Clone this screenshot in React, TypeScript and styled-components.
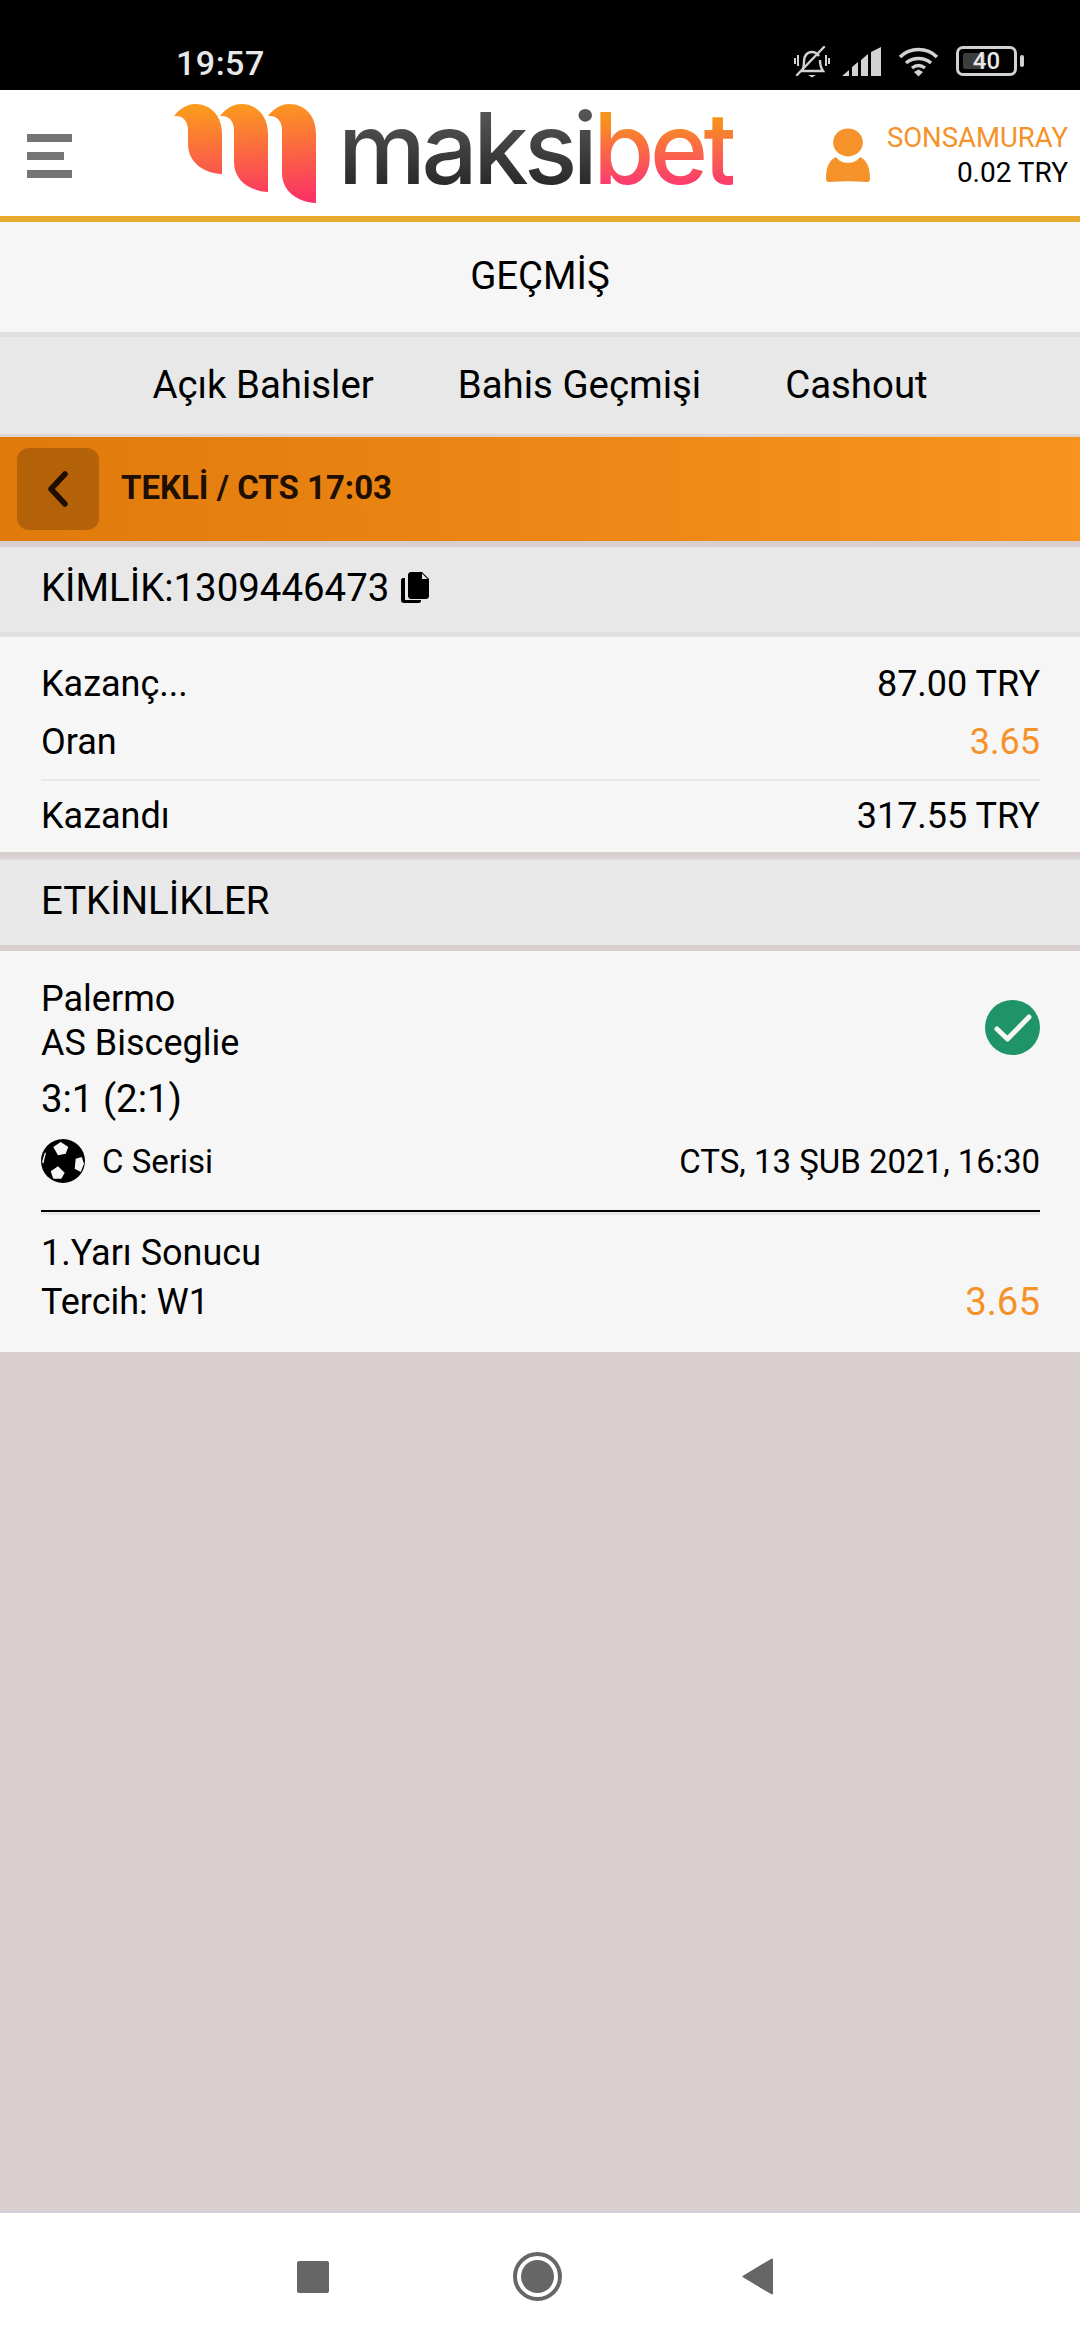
import styled, { createGlobalStyle } from 'styled-components'

const ORANGE = '#f5922a'

const GlobalStyle = createGlobalStyle`
  html, body {
    margin: 0;
    padding: 0;
    background: #d9cfcf;
  }
  * {
    box-sizing: border-box;
  }
`

export default function App() {
  return (
    <Page>
      <GlobalStyle />
      <StatusBar>
        <Clock>19:57</Clock>
        <StatusIcons>
          <svg width="36" height="32" viewBox="0 0 36 32" fill="none" stroke="#d2d2d2" strokeWidth="2.4">
            <path d="M8 25c2-3 2-6 2-10 0-5 3-9 8-9 3 0 5 1 7 4M26 14c0 5 1 8 3 11H7" />
            <path d="M3 29 30 1" strokeLinecap="round" />
            <path d="M1 12v6M4 9v11M32 9v11M35 12v6" strokeWidth="2" />
            <path d="M14 29h8l-4 2.5z" fill="#d2d2d2" stroke="none" />
          </svg>
          <SignalIcon width="40" height="30" viewBox="0 0 40 30" fill="#d2d2d2">
            <path d="M0 29 7 23v6zM10 20l6-5v14h-6zM19 13l7-6v22h-7zM29 5l10-5v29H29z" />
          </SignalIcon>
          <WifiIcon width="41" height="30" viewBox="0 0 41 30" fill="none" stroke="#d2d2d2" strokeWidth="3.4">
            <path d="M2 10C12 0 29 0 39 10M8 16c7-6 18-6 25 0M14 21c4-3 9-3 13 0" />
            <path d="M16 25l4.500-2.500L25 25l-4.500 4.500z" fill="#d2d2d2" stroke="none" />
          </WifiIcon>
          <Battery>
            <BatteryLevel />
            <BatteryText>40</BatteryText>
            <BatteryNub />
          </Battery>
        </StatusIcons>
      </StatusBar>

      <Header>
        <Hamburger>
          <Bar />
          <Bar $short />
          <Bar />
        </Hamburger>
        <LogoMark width="142" height="99" viewBox="0 0 142 99">
          <defs>
            <linearGradient id="leaf" gradientUnits="userSpaceOnUse" x1="70" y1="0" x2="78" y2="99">
              <stop offset="0" stopColor="#fb9a1e" />
              <stop offset="1" stopColor="#fb3366" />
            </linearGradient>
          </defs>
          <g fill="url(#leaf)">
            <path d="M0 12c6-8 14-12 21-12 16 0 27 12 27 30v40c-19-1-34-12-34-30V26c0-9-5-15-14-14z" />
            <path d="M46 12c6-8 14-12 21-12 16 0 27 12 27 30v58c-19-1-34-12-34-30V26c0-9-5-15-14-14z" />
            <path d="M94 12c6-8 14-12 21-12 16 0 27 12 27 30v69c-19-1-34-12-34-30V26c0-9-5-15-14-14z" />
          </g>
        </LogoMark>
        <Wordmark>
          <WordDark>maksi</WordDark>
          <WordBright>bet</WordBright>
        </Wordmark>
        <UserBlock>
          <svg width="44" height="55" viewBox="0 0 43 57" preserveAspectRatio="none" fill={ORANGE}>
            <circle cx="21.500" cy="15" r="14.500" />
            <path d="M0 52c0-11 3-19 10-22 2 4 6 6 11.500 6S31 34 33 30c7 3 10 11 10 22 0 3-1 4-3 4-12-1-25-1-37 0-2 0-3-1-3-4z" />
          </svg>
          <UserText>
            <UserName>SONSAMURAY</UserName>
            <Balance>0.02 TRY</Balance>
          </UserText>
        </UserBlock>
      </Header>

      <PageTitle>GEÇMİŞ</PageTitle>

      <Tabs>
        <Tab>Açık Bahisler</Tab>
        <Tab>Bahis Geçmişi</Tab>
        <Tab>Cashout</Tab>
      </Tabs>

      <BetBar>
        <BackButton>
          <svg width="22" height="36" viewBox="0 0 22 36" fill="none" stroke="#1f0f00" strokeWidth="5.500" strokeLinecap="round" strokeLinejoin="round">
            <path d="M18 3 4 18l14 15" />
          </svg>
        </BackButton>
        <BetTitle>TEKLİ / CTS 17:03</BetTitle>
      </BetBar>

      <IdBar>
        KİMLİK:1309446473
        <svg width="28" height="31" viewBox="0 0 28 31" fill="#000">
          <path d="M7 3c0-1.500 1-3 3-3h11l7 7v17c0 1.500-1 3-3 3H10c-2 0-3-1.500-3-3z" />
          <path d="M0 8c0-1 1-2 2-2h2v21c0 .6.400 1 1 1h15v1c0 1-1 2-2 2H3c-2 0-3-1-3-3z" />
          <path d="M21 1.500V7h5.500z" fill="#e8e8e8" />
        </svg>
      </IdBar>

      <Summary>
        <SummaryRow>
          <span>Kazanç...</span>
          <span>87.00 TRY</span>
        </SummaryRow>
        <SummaryRow>
          <span>Oran</span>
          <Odds>3.65</Odds>
        </SummaryRow>
        <SummaryDivider />
        <SummaryRow>
          <span>Kazandı</span>
          <span>317.55 TRY</span>
        </SummaryRow>
      </Summary>

      <SectionBar>ETKİNLİKLER</SectionBar>

      <EventCard>
        <Teams>
          <TeamNames>
            <TeamLine>Palermo</TeamLine>
            <TeamLine>AS Bisceglie</TeamLine>
          </TeamNames>
          <CheckBadge width="55" height="55" viewBox="0 0 55 55">
            <circle cx="27.500" cy="27.500" r="27.500" fill="#1f9469" />
            <path d="M12 29l10.500 10L44 17" fill="none" stroke="#f6f6f6" strokeWidth="5" strokeLinecap="round" strokeLinejoin="round" />
          </CheckBadge>
        </Teams>
        <Score>3:1 (2:1)</Score>
        <MetaRow>
          <League>
            <svg width="44" height="44" viewBox="0 0 44 44">
              <circle cx="22" cy="22" r="22" fill="#000" />
              <g fill="#f6f6f6">
                <path d="M12.300 8 19.700 3l7.600 5-2.600 6.700L17 16.300z" />
                <path d="M34.700 19.700 40.700 18l2.300 6.700-3.300 8.300-6-3.300z" />
                <path d="M9.700 32.300 17 27.300l6.700 6.400-3.400 6h-8z" />
                <path d="M3.700 13.700H5L2.300 24.700 1 23z" />
              </g>
            </svg>
            <LeagueName>C Serisi</LeagueName>
          </League>
          <EventDate>CTS, 13 ŞUB 2021, 16:30</EventDate>
        </MetaRow>
        <EventDivider />
        <MarketLine>1.Yarı Sonucu</MarketLine>
        <MarketRow>
          <span>Tercih: W1</span>
          <MarketOdds>3.65</MarketOdds>
        </MarketRow>
      </EventCard>

      <Filler />

      <NavBar>
        <NavSquare />
        <NavHome>
          <NavHomeDot />
        </NavHome>
        <svg width="31" height="37" viewBox="0 0 31 37" fill="#666" stroke="#666" strokeWidth="2" strokeLinejoin="round">
          <path d="M30 1.500v34L1.500 18.500z" />
        </svg>
      </NavBar>
    </Page>
  )
}

const Page = styled.div`
  width: 1080px;
  height: 2340px;
  display: flex;
  flex-direction: column;
  overflow: hidden;
  background: #d9cfcf;
  color: #000;
  font-family: 'Roboto', sans-serif;
`

const StatusBar = styled.div`
  height: 90px;
  flex: none;
  background: #000;
  display: flex;
  align-items: flex-start;
  justify-content: space-between;
  padding: 46px 63px 0 176px;
`

const Clock = styled.div`
  margin-top: 1px;
  color: #e8e8e8;
  font-size: 34px;
  font-weight: 500;
  line-height: 32px;
  letter-spacing: 0.5px;
`

const StatusIcons = styled.div`
  display: flex;
  align-items: flex-start;
`

const SignalIcon = styled.svg`
  margin: 1px 0 0 12px;
`

const WifiIcon = styled.svg`
  margin: 1px 0 0 16px;
`

const Battery = styled.div`
  width: 61px;
  height: 30px;
  margin-left: 17px;
  position: relative;
  border: 3px solid #d2d2d2;
  border-radius: 7px;
  display: flex;
  align-items: center;
  justify-content: center;
`

const BatteryLevel = styled.div`
  position: absolute;
  left: 4px;
  top: 4px;
  bottom: 4px;
  width: 22px;
  background: #3c3c3c;
  border-radius: 2px;
`

const BatteryText = styled.span`
  position: relative;
  color: #e8e8e8;
  font-size: 24px;
  font-weight: 500;
  line-height: 24px;
`

const BatteryNub = styled.div`
  position: absolute;
  right: -10px;
  top: 6px;
  width: 4px;
  height: 12px;
  background: #d2d2d2;
  border-radius: 2px;
`

const Header = styled.header`
  height: 132px;
  flex: none;
  background: #fff;
  border-bottom: 6px solid #e8aa2e;
  display: flex;
  align-items: flex-start;
  padding-left: 27px;
`

const Hamburger = styled.div`
  width: 45px;
  margin-top: 44px;
  display: flex;
  flex-direction: column;
  gap: 10px;
`

const Bar = styled.div<{ $short?: boolean }>`
  height: 8px;
  width: ${(p) => (p.$short ? '37px' : '45px')};
  background: #757575;
`

const LogoMark = styled.svg`
  flex: none;
  margin: 14px 0 0 102px;
`

const Wordmark = styled.div`
  margin: 0 0 0 22px;
  display: flex;
  font-family: 'Inter', sans-serif;
  font-size: 99px;
  font-weight: 500;
  line-height: 116px;
  letter-spacing: -4.5px;
`

const WordDark = styled.span`
  background: linear-gradient(180deg, #555 20%, #2b2b2b 80%);
  -webkit-background-clip: text;
  background-clip: text;
  color: transparent;
`

const WordBright = styled.span`
  background: linear-gradient(180deg, #f7931e 25%, #fb3f6c 78%);
  -webkit-background-clip: text;
  background-clip: text;
  color: transparent;
`

const UserBlock = styled.div`
  margin: 38px 12px 0 auto;
  display: flex;
  align-items: flex-start;
  gap: 17px;
`

const UserText = styled.div`
  display: flex;
  flex-direction: column;
  align-items: flex-end;
  margin-top: -8px;
`

const UserName = styled.div`
  color: ${ORANGE};
  font-size: 27.5px;
  line-height: 35px;
`

const Balance = styled.div`
  font-size: 28px;
  line-height: 35px;
`

const PageTitle = styled.div`
  height: 115px;
  flex: none;
  background: #f6f6f6;
  border-bottom: 5px solid;
  border-image: linear-gradient(180deg, #d9cfcf 60%, #e0e0e0 60%) 1;
  display: flex;
  align-items: center;
  justify-content: center;
  padding-bottom: 3px;
  font-size: 38.4px;
`

const Tabs = styled.div`
  height: 100px;
  flex: none;
  background: #e8e8e8;
  border-bottom: 3px solid #dcd5d2;
  display: flex;
  align-items: center;
  justify-content: center;
  gap: 84px;
  padding-bottom: 3px;
`

const Tab = styled.div`
  font-size: 38.4px;
`

const BetBar = styled.div`
  height: 104px;
  flex: none;
  background: linear-gradient(90deg, #e07a0b, #f8931f);
  display: flex;
  align-items: center;
  padding-left: 17px;
`

const BackButton = styled.div`
  width: 82px;
  height: 82px;
  border-radius: 12px;
  background: rgba(0, 0, 0, 0.2);
  display: flex;
  align-items: center;
  justify-content: center;
`

const BetTitle = styled.div`
  margin: 0 0 3px 22px;
  color: #1f0f00;
  font-size: 33px;
  font-weight: 700;
`

const GreyBar = styled.div`
  flex: none;
  background: #e8e8e8;
  display: flex;
  align-items: center;
  padding-left: 41px;
  font-size: 38.4px;
`

const IdBar = styled(GreyBar)`
  height: 96px;
  gap: 12px;
  padding-bottom: 4px;
  border-top: 6px solid #dfd3ca;
  border-bottom: 5px solid;
  border-image: linear-gradient(180deg, #d9cfcf 60%, #e0e0e0 60%) 1;
`

const Summary = styled.div`
  height: 215px;
  flex: none;
  background: #f6f6f6;
  padding: 18px 40px 0 41px;
`

const SummaryRow = styled.div`
  height: 58px;
  display: flex;
  align-items: center;
  justify-content: space-between;
  font-size: 36px;
`

const Odds = styled.span`
  color: ${ORANGE};
`

const SummaryDivider = styled.div`
  height: 2px;
  margin: 8px 0 6px;
  background: #e8e8e8;
`

const SectionBar = styled(GreyBar)`
  height: 99px;
  padding-bottom: 5px;
  border-top: 8px solid;
  border-bottom: 6px solid;
  border-image: linear-gradient(180deg, #d9cfcf 5%, #e0e0e0 8%, #e0e0e0 92%, #d9cfcf 95%) 8 0 6 0;
`

const EventCard = styled.div`
  height: 401px;
  flex: none;
  background: #f6f6f6;
  padding: 26px 40px 0 41px;
`

const Teams = styled.div`
  display: flex;
  align-items: flex-start;
  justify-content: space-between;
`

const CheckBadge = styled.svg`
  margin-top: 23px;
`

const TeamNames = styled.div`
  display: flex;
  flex-direction: column;
`

const TeamLine = styled.div`
  font-size: 36px;
  line-height: 44px;
`

const Score = styled.div`
  margin-top: 12px;
  font-size: 38.4px;
  line-height: 44px;
`

const MetaRow = styled.div`
  margin-top: 18px;
  height: 44px;
  display: flex;
  align-items: center;
  justify-content: space-between;
`

const League = styled.div`
  display: flex;
  align-items: center;
  gap: 17px;
`

const LeagueName = styled.span`
  font-size: 33px;
`

const EventDate = styled.span`
  font-size: 33px;
`

const EventDivider = styled.div`
  margin-top: 27px;
  height: 5px;
  background: #e8e8e8;
  border-top: 2px solid #000;
`

const MarketLine = styled.div`
  margin-top: 13px;
  height: 49px;
  display: flex;
  align-items: center;
  font-size: 36px;
`

const MarketRow = styled.div`
  height: 49px;
  display: flex;
  align-items: center;
  justify-content: space-between;
  font-size: 36px;
`

const MarketOdds = styled.span`
  color: ${ORANGE};
  font-size: 38.4px;
`

const Filler = styled.div`
  flex: 1;
  background: #d9cfcf;
`

const NavBar = styled.nav`
  height: 130px;
  flex: none;
  background: #fff;
  border-top: 3px solid #d5d0d8;
  display: flex;
  align-items: center;
  padding-left: 297px;
`

const NavSquare = styled.div`
  width: 32px;
  height: 32px;
  background: #666;
  border-radius: 2px;
`

const NavHome = styled.div`
  width: 49px;
  height: 49px;
  margin: 0 180px 0 184px;
  border: 4px solid #666;
  border-radius: 50%;
  padding: 4px;
`

const NavHomeDot = styled.div`
  width: 100%;
  height: 100%;
  background: #666;
  border-radius: 50%;
`
